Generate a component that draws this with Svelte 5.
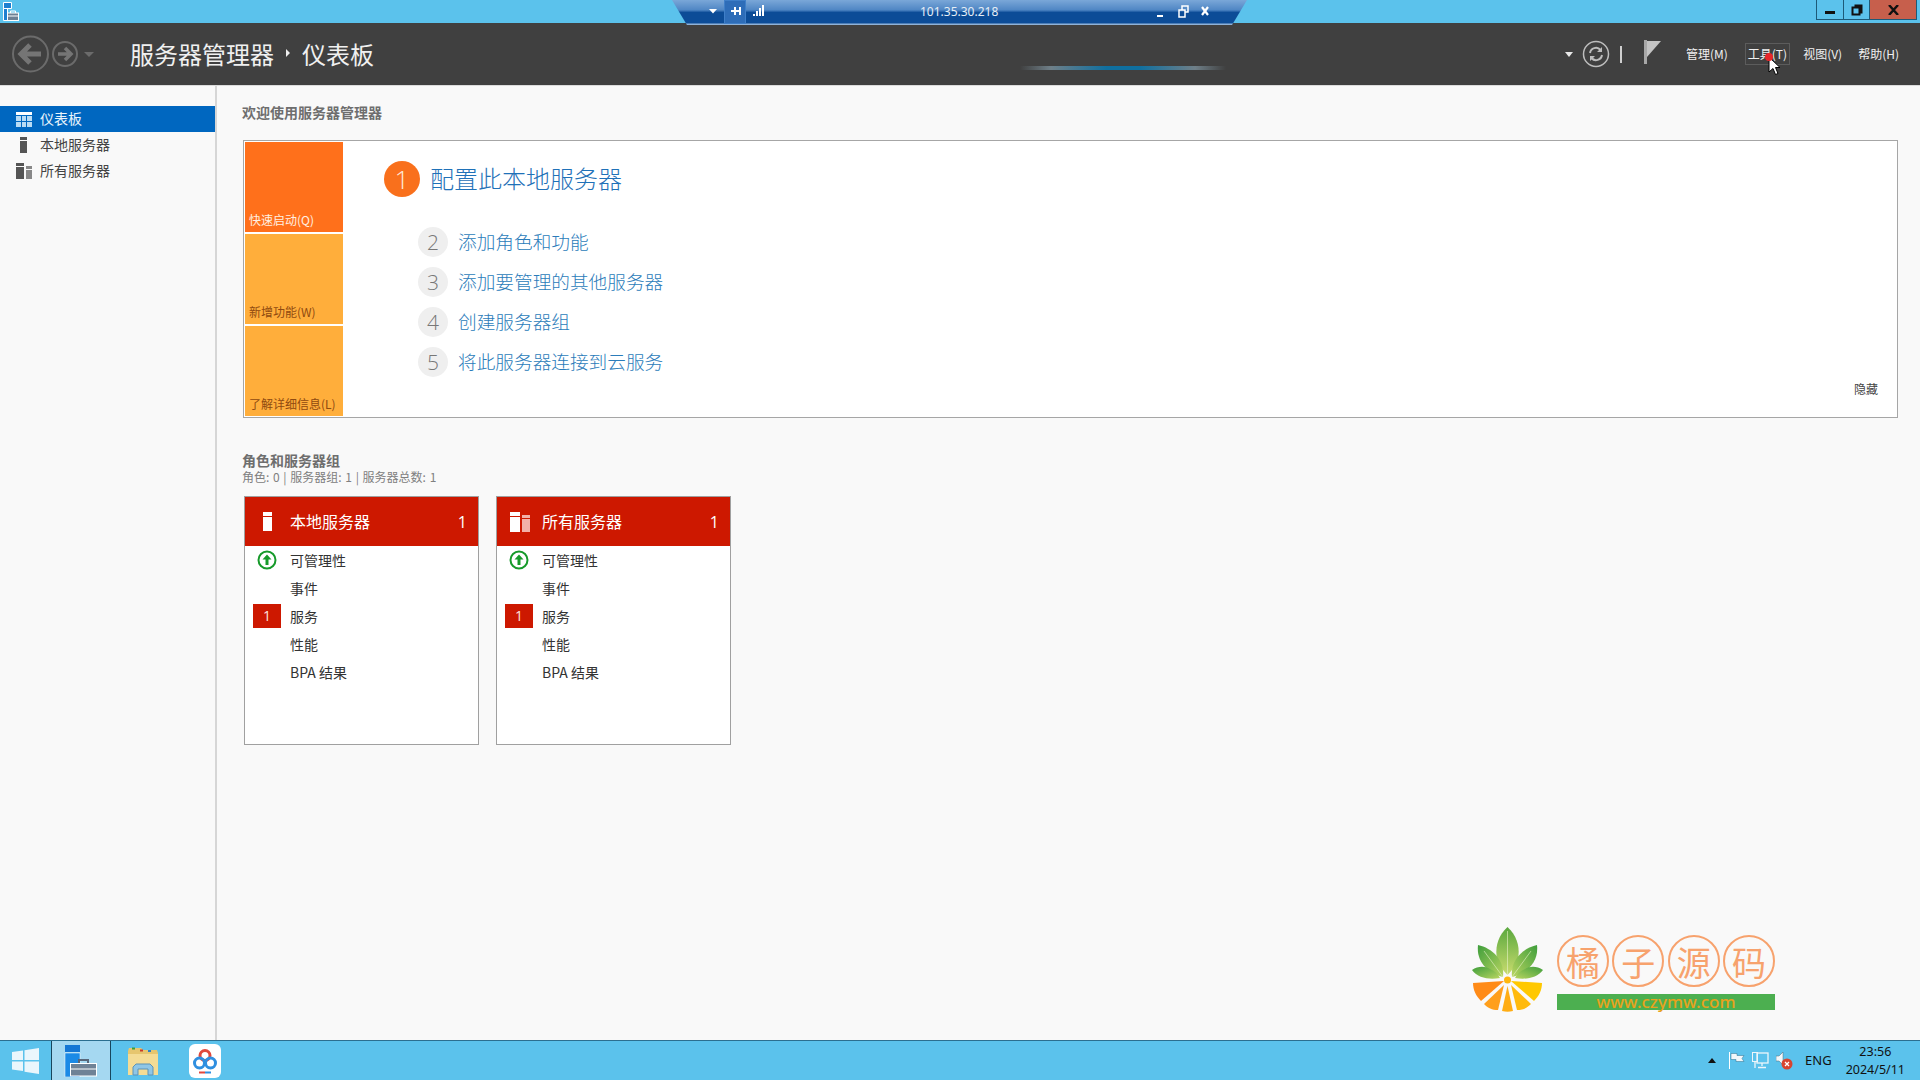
<script>
  const navItems = [
    { label: '仪表板', icon: 'grid', active: true },
    { label: '本地服务器', icon: 'one' },
    { label: '所有服务器', icon: 'all' }
  ];
  const tiles = [
    { label: '快速启动(Q)', cls: 'hot' },
    { label: '新增功能(W)', cls: '' },
    { label: '了解详细信息(L)', cls: '' }
  ];
  const steps = [
    { n: 2, text: '添加角色和功能' },
    { n: 3, text: '添加要管理的其他服务器' },
    { n: 4, text: '创建服务器组' },
    { n: 5, text: '将此服务器连接到云服务' }
  ];
  const cards = [
    { title: '本地服务器', icon: 'one' },
    { title: '所有服务器', icon: 'all' }
  ];
  const menus = ['管理(M)', '工具(T)', '视图(V)', '帮助(H)'];
</script>

<div class="desktop">
  <div class="titlebar">
    <svg class="app-icon" width="18" height="19" viewBox="0 0 18 19">
      <path d="M2.5 .5h8v6h-8zM2.5 6.500h4v12h-4z" fill="#1d7fd0" stroke="#fff" />
      <rect x="6.500" y="11" width="11" height="7.500" fill="#6d8094" stroke="#fff" />
      <path d="M9.500 11V9h5v2M7 14h10" fill="none" stroke="#fff" />
    </svg>
    <div class="win-buttons">
      <div class="wb"><span class="min"></span></div>
      <div class="wb small"><svg width="12" height="12" viewBox="0 0 12 12"><path d="M3.500 1.500h7v7h-2M1.500 3.500h7v7h-7z" fill="none" stroke="#111" stroke-width="2" /></svg></div>
      <div class="wb close"><svg width="11" height="10" viewBox="0 0 11 10"><path d="M1 0l9 10M10 0L1 10" stroke="#111" stroke-width="2.400" /></svg></div>
    </div>
  </div>

  <header class="toolbar">
    <svg class="nav-arrows" width="80" height="40" viewBox="0 0 80 40">
      <g fill="none" stroke="#6b6b6b">
        <circle cx="18.500" cy="20" r="17.500" stroke-width="2" />
        <path d="M29 20H10M18 11l-9 9 9 9" stroke="#757575" stroke-width="5" />
        <circle cx="53" cy="20" r="12" stroke-width="2" />
        <path d="M46 20h13M53 14l6 6-6 6" stroke="#757575" stroke-width="3.500" />
      </g>
      <path d="M72 18h10l-5 5z" fill="#6b6b6b" />
    </svg>
    <div class="crumb">
      <span>服务器管理器</span>
      <svg width="6" height="10" viewBox="0 0 6 10"><path d="M1 1l4 4-4 4z" fill="#eee" /></svg>
      <span>仪表板</span>
    </div>
    <div class="tools">
      <svg width="8" height="5" viewBox="0 0 8 5"><path d="M0 0h8L4 5z" fill="#e8e8e8" /></svg>
      <svg class="refresh" width="28" height="28" viewBox="0 0 28 28">
        <circle cx="14" cy="14" r="12.500" fill="none" stroke="#bdbdbd" stroke-width="1.500" />
        <path d="M8 13a6 6 0 0 1 10.500-3M20 15a6 6 0 0 1-10.500 3" fill="none" stroke="#bdbdbd" stroke-width="2" />
        <path d="M20 7v5h-5zM8 21v-5h5z" fill="#bdbdbd" />
      </svg>
      <span class="sep"></span>
      <svg class="flag" width="18" height="24" viewBox="0 0 18 24"><path d="M0 0h3v24H0z" fill="#a8a8a8" /><path d="M3 1h14L3 17z" fill="#c4c4c4" /></svg>
      <nav class="menus">
        {#each menus as m, i}
          <span class="menu" class:hover={i === 1}>{m}</span>
        {/each}
      </nav>
    </div>
  </header>

  <div class="body">
    <aside class="sidebar">
      {#each navItems as item}
        <div class="nav-item" class:active={item.active}>
          <span class="nav-icon">
            {#if item.icon === 'grid'}
              <svg width="16" height="15" viewBox="0 0 16 15">
                <rect width="16" height="3" fill="#fff" />
                <path d="M0 4h5v5H0zM6 4h4v5H6zM11 4h5v5h-5zM0 10h5v5H0zM6 10h4v5H6zM11 10h5v5h-5z" fill="#b9dcf5" />
              </svg>
            {:else if item.icon === 'one'}
              <svg width="8" height="16" viewBox="0 0 8 16"><path d="M0 0h7v3H0zM0 4h7v12H0z" fill="#555" /></svg>
            {:else}
              <svg width="16" height="16" viewBox="0 0 16 16"><path d="M0 0h8v3H0zM0 4h8v12H0z" fill="#555" /><path d="M10 3h6v3h-6zM10 7h6v9h-6z" fill="#888" /></svg>
            {/if}
          </span>
          <span class="nav-label">{item.label}</span>
        </div>
      {/each}
    </aside>

    <main class="content">
      <h2 class="welcome">欢迎使用服务器管理器</h2>

      <section class="quick">
        <div class="tiles">
          {#each tiles as t}
            <div class="tile {t.cls}">{t.label}</div>
          {/each}
        </div>
        <div class="steps">
          <div class="step-main">
            <span class="num-big">1</span>
            <span class="step-text">配置此本地服务器</span>
          </div>
          {#each steps as s}
            <div class="step">
              <span class="num">{s.n}</span>
              <span class="step-text">{s.text}</span>
            </div>
          {/each}
        </div>
        <span class="hide">隐藏</span>
      </section>

      <h3 class="roles">角色和服务器组</h3>
      <p class="roles-sub">角色: 0 | 服务器组: 1 | 服务器总数: 1</p>

      <div class="cards">
        {#each cards as c}
          <div class="card">
            <div class="card-head">
              <span class="card-icon">
                {#if c.icon === 'one'}
                  <svg width="9" height="19" viewBox="0 0 9 19"><path d="M0 0h9v4H0zM0 5h9v14H0z" fill="#fff" /></svg>
                {:else}
                  <svg width="20" height="20" viewBox="0 0 20 20"><path d="M0 0h10v4H0zM0 5h10v15H0z" fill="#fff" /><path d="M12 3h8v3h-8zM12 7h8v13h-8z" fill="#f2b0a8" /></svg>
                {/if}
              </span>
              <span class="card-title">{c.title}</span>
              <span class="card-count">1</span>
            </div>
            <div class="row">
              <span class="slot">
                <svg width="20" height="20" viewBox="0 0 20 20">
                  <circle cx="10" cy="10" r="8.500" fill="#fff" stroke="#169a2a" stroke-width="2" />
                  <path d="M10 4.500l4.500 5h-3V15h-3V9.500h-3z" fill="#169a2a" />
                </svg>
              </span>
              可管理性
            </div>
            <div class="row"><span class="slot"></span>事件</div>
            <div class="row"><span class="slot"><span class="badge">1</span></span>服务</div>
            <div class="row"><span class="slot"></span>性能</div>
            <div class="row"><span class="slot"></span>BPA 结果</div>
          </div>
        {/each}
      </div>
    </main>
  </div>

  <footer class="taskbar">
    <div class="task start">
      <svg width="27" height="26" viewBox="0 0 27 26"><path d="M0 4l11-1.500V12H0zM12.500 2.200L27 0v12H12.500zM0 13.500h11V23L0 21.500zM12.500 13.500H27V26l-14.500-2.200z" fill="#eaf6fc" /></svg>
    </div>
    <div class="task running">
      <svg width="34" height="32" viewBox="0 0 34 32">
        <path d="M1 0h15v7H1z" fill="#1577d4" /><path d="M1 8h15v24H1z" fill="#1b8ae6" stroke="#fff" stroke-width=".5" />
        <rect x="6.500" y="18.500" width="26" height="12.500" fill="#6f8296" stroke="#fff" />
        <path d="M15 18v-3h9v3" fill="none" stroke="#59677a" stroke-width="2" />
        <path d="M7 24h25" stroke="#fff" />
      </svg>
    </div>
    <div class="task explorer">
      <svg width="32" height="30" viewBox="0 0 32 30">
        <path d="M1 5l1-3h12l2 2h14l1 3v22H1z" fill="#e6c66f" />
        <path d="M1 8h30v21H1z" fill="#f4dc95" />
        <path d="M5 1.500h3v2H5z" fill="#3aa03a" /><path d="M13 3.500h3v2h-3z" fill="#c93a2a" /><path d="M21 4h3v2h-3z" fill="#2a80c9" />
        <path d="M6 29V21l3-3h14l3 3v8h-5v-6H11v6z" fill="#8fc6e6" stroke="#5b93b8" />
      </svg>
    </div>
    <div class="task netdisk">
      <svg width="24" height="26" viewBox="0 0 24 26">
        <circle cx="12" cy="7.500" r="5" fill="none" stroke="#e0483c" stroke-width="3" />
        <circle cx="6.500" cy="15" r="5" fill="none" stroke="#2f8fe0" stroke-width="3" />
        <circle cx="17.500" cy="15" r="5" fill="none" stroke="#2f8fe0" stroke-width="3" />
        <path d="M6 24.500h6" stroke="#e0483c" stroke-width="2" /><path d="M12 24.500h6" stroke="#2f8fe0" stroke-width="2" />
      </svg>
    </div>
    <div class="tray">
      <svg width="8" height="5" viewBox="0 0 8 5"><path d="M0 5l4-5 4 5z" fill="#111" /></svg>
      <svg class="t-flag" width="16" height="17" viewBox="0 0 16 17"><path d="M.5 0v17" stroke="#fff" /><path d="M2 1.500h6v2h7l-2 3 2 3H7v-2H2z" fill="#f2f7fa" stroke="#2d6e8f" stroke-width=".5" /></svg>
      <svg class="t-net" width="17" height="17" viewBox="0 0 17 17"><rect x="5" y="1" width="11" height="10" fill="none" stroke="#eef6fa" stroke-width="1.300" /><rect x=".5" y=".5" width="5" height="9" fill="none" stroke="#eef6fa" /><path d="M10 11v3M6 15.500h8M3 10v6" stroke="#eef6fa" stroke-width="1.300" /></svg>
      <svg class="t-sound" width="17" height="18" viewBox="0 0 17 18"><path d="M0 4h3l4-4v13L3 9H0z" fill="#f2f7fa" stroke="#49687a" stroke-width=".5" /><circle cx="11" cy="12" r="5.500" fill="#d8442f" /><path d="M9 10l4 4M13 10l-4 4" stroke="#fff" stroke-width="1.300" /></svg>
      <span class="eng">ENG</span>
      <div class="clock"><span>23:56</span><span>2024/5/11</span></div>
    </div>
  </footer>

  <!-- remote desktop connection bar -->
  <div class="rdp">
    <svg class="rdp-icons" width="100" height="25" viewBox="0 0 100 25">
      <rect x="52.500" y=".5" width="21" height="23" fill="#2e6db8" stroke="#3f7fc8" />
      <path d="M37 9h8l-4 4.500z" fill="#fff" />
      <path d="M59 11h9M63 7v8M68 7v8" stroke="#fff" stroke-width="2" fill="none" />
      <path d="M81 14h2v2h-2zM84 11h2v5h-2zM87 8h2v8h-2zM90 5h2v11h-2z" fill="#fff" />
    </svg>
    <span class="rdp-ip">101.35.30.218</span>
    <svg class="rdp-win" width="60" height="16" viewBox="0 0 60 16">
      <path d="M0 11h6v2H0z" fill="#fff" />
      <path d="M22 6h6v7h-6zM25 6V2h6v6h-3" fill="none" stroke="#fff" stroke-width="1.500" />
      <path d="M45 3l6 8M51 3l-6 8" stroke="#fff" stroke-width="2.200" />
    </svg>
  </div>

  <div class="progress"></div>

  <svg class="cursor" width="14" height="22" viewBox="0 0 14 22">
    <path d="M2 1v15l4-3.500 2.500 6 2.500-1-2.500-6H13z" fill="#fff" stroke="#000" />
    <circle cx="2" cy="1" r="4" fill="#e8262a" />
  </svg>

  <!-- watermark -->
  <div class="mark">
    <svg class="mark-logo" width="76" height="88" viewBox="0 0 76 88">
      <defs>
        <linearGradient id="lf" x1="0" y1="0" x2="0" y2="1"><stop offset="0" stop-color="#5aa83e" /><stop offset="1" stop-color="#c9dc6e" /></linearGradient>
        <linearGradient id="lf2" x1="0" y1="0" x2="1" y2="1"><stop offset="0" stop-color="#3f9e3c" /><stop offset="1" stop-color="#b9d560" /></linearGradient>
        <linearGradient id="lf3" x1="1" y1="0" x2="0" y2="1"><stop offset="0" stop-color="#3f9e3c" /><stop offset="1" stop-color="#b9d560" /></linearGradient>
      </defs>
      <path d="M36.500 1c9 8 12 19 11 28-1 8-6 15-11 20-5-5-10-12-11-20-1-9 2-20 11-28z" fill="url(#lf)" />
      <path d="M7 19c14 3 27 15 25 32C17 47 5 36 7 19z" fill="url(#lf2)" />
      <path d="M66 19c-14 3-27 15-25 32 15-4 27-15 25-32z" fill="url(#lf3)" />
      <path d="M1 44c6-4 13-4 18-1 5 2 8 5 10 9-11 2-22 0-28-8z" fill="url(#lf2)" />
      <path d="M72 44c-6-4-13-4-18-1-5 2-8 5-10 9 11 2 22 0 28-8z" fill="url(#lf3)" />
      <path d="M36.500 5v44M13 25l19 26M60 25L41 51" stroke="#e8f4c8" stroke-width=".6" fill="none" />
      <path d="M2 57l31-2-23 20C5 70 2 64 2 57z" fill="#ff8b18" />
      <path d="M13 78l20-19 -6 25c-6 0-10-2-14-6z" fill="#ff9f1c" />
      <path d="M31 85l5.500-25 5.500 25c-4 1-7 1-11 0z" fill="#ffad14" />
      <path d="M46 84l-6-25 20 19c-4 4-8 6-14 6z" fill="#ffba0d" />
      <path d="M71 57l-31-2 23 20c5-5 8-11 8-18z" fill="#ffc800" />
      <circle cx="36.500" cy="54" r="3.500" fill="#ffb80d" />
    </svg>
    <div class="mark-brand">
      <div class="stamps">
        {#each ['橘', '子', '源', '码'] as ch}
          <span class="stamp">{ch}</span>
        {/each}
      </div>
      <div class="mark-url">www.czymw.com</div>
    </div>
  </div>
</div>

<style>
  :global(body) {
    margin: 0;
    font-family: "Noto Sans CJK SC", "Noto Sans", sans-serif;
    overflow: hidden;
  }

  .desktop {
    position: relative;
    display: flex;
    flex-direction: column;
    width: 1920px;
    height: 1080px;
    background: #f9f9f9;
    color: #333;
    overflow: hidden;
  }

  .titlebar {
    display: flex;
    justify-content: space-between;
    height: 23px;
    background: #5bc2ec;
  }
  .app-icon { margin: 2px 0 0 1px; }
  .win-buttons {
    display: flex;
    height: 19px;
    margin-right: 3px;
    border-left: 1px solid #1d5a78;
    border-bottom: 1px solid #1d5a78;
    border-right: 1px solid #1d5a78;
  }
  .wb {
    display: flex;
    align-items: center;
    justify-content: center;
    box-sizing: border-box;
    width: 27px;
    border-right: 1px solid #1d5a78;
  }
  .wb.small { width: 26px; }
  .wb.close {
    width: 46px;
    background: #c75f4c;
    border-right: 0;
  }
  .min { width: 10px; height: 3px; margin-top: 5px; background: #111; }

  .toolbar {
    display: flex;
    align-items: center;
    height: 62px;
    background: #404040;
    border-bottom: 1px solid #dcdcdc;
    box-sizing: content-box;
  }
  .nav-arrows { margin-left: 12px; overflow: visible; }
  .crumb {
    display: flex;
    align-items: center;
    gap: 11px;
    margin-left: 38px;
    padding-bottom: 2px;
    font-size: 24px;
    color: #f0f0f0;
  }
  .tools {
    display: flex;
    align-items: center;
    margin-left: auto;
    margin-right: 18px;
  }
  .refresh { margin-left: 9px; }
  .sep { width: 2px; height: 17px; margin: 0 22px 0 10px; background: #cfcfcf; }
  .flag { margin-top: -4px; }
  .menus { display: flex; gap: 10px; margin-left: 21px; }
  .menu {
    padding: 1px 2px;
    border: 1px solid transparent;
    font-size: 12px;
    line-height: 18px;
    color: #f0f0f0;
  }
  .menu.hover { border-color: #5c5c5c; margin-left: 4px; }

  .body { display: flex; flex: 1; min-height: 0; }

  .sidebar {
    width: 215px;
    padding-top: 20px;
    border-right: 2px solid #d6d6d6;
    background: #f9f9f9;
    flex: none;
    box-sizing: content-box;
  }
  .nav-item {
    display: flex;
    align-items: center;
    height: 26px;
    font-size: 14px;
    color: #444;
  }
  .nav-label { padding-bottom: 2px; }
  .nav-item.active { background: #0067c0; color: #e8f4fc; }
  .nav-icon {
    display: flex;
    justify-content: center;
    align-items: center;
    width: 24px;
    margin: 0 4px 0 12px;
  }

  .content { flex: 1; padding: 16px 22px 0 25px; min-width: 0; }
  .welcome {
    margin: 0;
    font-size: 14px;
    line-height: 20px;
    font-weight: 700;
    color: #6e6e6e;
  }

  .quick {
    display: flex;
    margin: 18px 0 0 1px;
    height: 274px;
    padding: 1px;
    border: 1px solid #a6a6a6;
    background: #fff;
  }
  .tiles { display: flex; flex-direction: column; gap: 2px; flex: none; }
  .tile {
    display: flex;
    align-items: flex-end;
    box-sizing: border-box;
    width: 98px;
    height: 90px;
    padding: 0 0 2px 4px;
    font-size: 12px;
    line-height: 20px;
    white-space: nowrap;
    background: #ffae3b;
    color: #8f4a10;
  }
  .tile.hot { background: #ff701b; color: #fff0e2; }

  .steps { flex: 1; padding-left: 41px; }
  .step-main {
    display: flex;
    align-items: center;
    gap: 10px;
    height: 36px;
    margin-top: 19px;
    font-size: 24px;
    font-weight: 300;
    color: #1f71b8;
  }
  .step-main .step-text { padding-bottom: 4px; }
  .num-big {
    display: flex;
    align-items: center;
    justify-content: center;
    width: 36px;
    height: 36px;
    border-radius: 50%;
    background: #f9701c;
    color: #ffe9da;
    font-family: "Open Sans", sans-serif;
    font-weight: 300;
    font-size: 26px;
  }
  .step {
    display: flex;
    align-items: center;
    gap: 10px;
    height: 30px;
    margin: 10px 0 0 34px;
    font-size: 18.670px;
    font-weight: 300;
    color: #2b7cba;
  }
  .step .step-text { padding-bottom: 3px; }
  .step-main + .step { margin-top: 30px; }
  .num {
    display: flex;
    align-items: center;
    justify-content: center;
    width: 30px;
    height: 30px;
    border-radius: 50%;
    background: #efefef;
    color: #777;
    font-family: "Open Sans", sans-serif;
    font-weight: 300;
    font-size: 21px;
  }
  .hide {
    align-self: flex-end;
    margin: 0 18px 17px 0;
    font-size: 12px;
    line-height: 20px;
    color: #444;
  }

  .roles {
    margin: 32px 0 0;
    font-size: 14px;
    line-height: 20px;
    font-weight: 700;
    color: #6e6e6e;
  }
  .roles-sub {
    margin: 0;
    font-size: 12px;
    line-height: 14px;
    word-spacing: 1px;
    color: #808080;
  }

  .cards { display: flex; gap: 17px; margin: 12px 0 0 2px; }
  .card {
    box-sizing: border-box;
    width: 235px;
    height: 249px;
    border: 1px solid #a0a0a0;
    background: #fff;
  }
  .card-head {
    display: flex;
    align-items: center;
    height: 49px;
    background: #cd1800;
    color: #fff;
    font-size: 16px;
  }
  .card-icon {
    display: flex;
    justify-content: center;
    width: 45px;
  }
  .card-title { flex: 1; padding-bottom: 2px; }
  .card-count { margin-right: 11px; font-family: "Open Sans", sans-serif; }
  .row {
    display: flex;
    align-items: center;
    height: 28px;
    font-size: 14px;
    color: #333;
  }
  .slot {
    display: flex;
    align-items: center;
    justify-content: center;
    width: 28px;
    margin: 0 9px 0 8px;
  }
  .badge {
    width: 28px;
    height: 24px;
    background: #cd1800;
    color: #fde4df;
    font-size: 14px;
    line-height: 24px;
    text-align: center;
    font-family: "Open Sans", sans-serif;
  }

  .taskbar {
    display: flex;
    align-items: center;
    height: 40px;
    background: #5bc2ec;
    border-top: 1px solid #2b6f90;
    box-sizing: border-box;
  }
  .task { display: flex; align-items: center; justify-content: center; height: 39px; }
  .start { width: 51px; }
  .running {
    box-sizing: border-box;
    width: 60px;
    background: #a5d8f1;
    border: 1px solid #17465e;
    border-width: 0 1px;
  }
  .explorer { width: 62px; margin-left: 1px; }
  .netdisk {
    width: 32px;
    height: 34px;
    margin-left: 15px;
    background: #fff;
    border-radius: 6px;
  }
  .tray {
    display: flex;
    align-items: center;
    margin-left: auto;
    margin-right: 15px;
  }
  .t-flag { margin-left: 13px; }
  .t-net { margin-left: 7px; }
  .t-sound { margin-left: 7px; }
  .eng {
    margin-left: 12px;
    padding-bottom: 2px;
    font-size: 13px;
    color: #111;
    font-family: "Noto Sans", sans-serif;
  }
  .clock {
    display: flex;
    flex-direction: column;
    align-items: center;
    margin-left: 14px;
    font-size: 12.500px;
    line-height: 18px;
    color: #111;
    font-family: "Noto Sans", sans-serif;
  }

  .rdp {
    position: absolute;
    top: 0;
    left: 672px;
    width: 575px;
    height: 25px;
    clip-path: polygon(0 0, 100% 0, 97.400% 100%, 2.600% 100%);
    background: linear-gradient(#7aa7d8 0, #4f86c4 40%, #0c4c97 50%, #0c4c97 92%, #8fb2d8 96%);
  }
  .rdp-icons { position: absolute; left: 0; top: 0; }
  .rdp-ip {
    position: absolute;
    left: 248px;
    top: 3px;
    line-height: 18px;
    font-family: "Noto Sans", sans-serif;
    font-size: 12px;
    color: #e6eef6;
  }
  .rdp-win { position: absolute; left: 485px; top: 4px; }

  .progress {
    position: absolute;
    left: 1020px;
    top: 66px;
    width: 206px;
    height: 4px;
    background: linear-gradient(90deg, transparent, #6f7f88 15%, #0f6f9f 42%, #0f6f9f 58%, #6f7f88 85%, transparent);
  }

  .cursor { position: absolute; left: 1767px; top: 56px; overflow: visible; }

  .mark {
    position: absolute;
    left: 1471px;
    top: 926px;
    display: flex;
    gap: 10px;
  }
  .mark-brand { display: flex; flex-direction: column; margin-top: 9px; }
  .stamps { display: flex; justify-content: space-between; width: 218px; }
  .stamp {
    display: flex;
    align-items: center;
    justify-content: center;
    box-sizing: border-box;
    width: 52px;
    height: 52px;
    border: 2px solid #f7a26d;
    border-radius: 50%;
    font-size: 34px;
    color: #f7a26d;
  }
  .mark-url {
    margin-top: 7px;
    width: 218px;
    height: 16px;
    background: #4caf50;
    color: #e8a21c;
    font-size: 17px;
    font-weight: 500;
    line-height: 16px;
    text-align: center;
    font-family: "Noto Sans", sans-serif;
  }
</style>
